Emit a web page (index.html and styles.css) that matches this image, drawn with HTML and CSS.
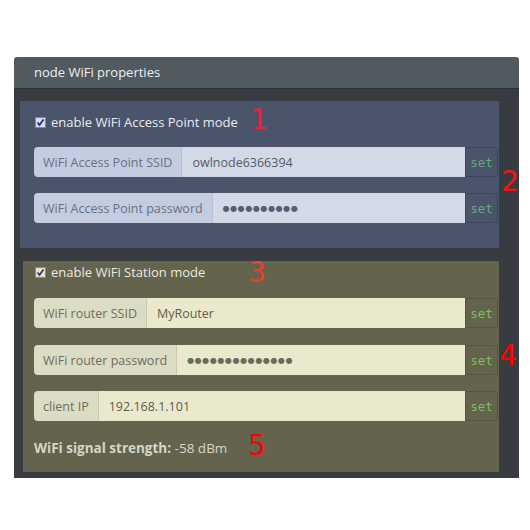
FILE: index.html
```html
<!DOCTYPE html>
<html>
<head>
<meta charset="utf-8">
<link rel="stylesheet" href="styles.css">
</head>
<body>
<div class="panel">
  <div class="panel-head">node WiFi properties</div>
  <div class="panel-body">
    <section class="box box-ap">
      <label class="check">
        <svg class="cb" width="11" height="11" viewBox="0 0 11 11"><rect x="0.5" y="0.5" width="10" height="10" fill="#d6dcee" stroke="#7e86a0"/><path d="M2.5 5.5 L4.5 8 L8.5 2.5" fill="none" stroke="#26307c" stroke-width="1.8"/></svg>
        <span>enable WiFi Access Point mode</span>
      </label>
      <div class="group">
        <span class="addon">WiFi Access Point SSID</span>
        <span class="field">owlnode6366394</span>
        <span class="btn">set</span>
      </div>
      <div class="group">
        <span class="addon">WiFi Access Point password</span>
        <span class="field dots">●●●●●●●●●●</span>
        <span class="btn">set</span>
      </div>
      <span class="mark m1">1</span>
      <span class="mark m2">2</span>
    </section>
    <section class="box box-st">
      <label class="check">
        <svg class="cb" width="11" height="11" viewBox="0 0 11 11"><rect x="0.5" y="0.5" width="10" height="10" fill="#e2e2d6" stroke="#8a8a78"/><path d="M2.5 5.5 L4.5 8 L8.5 2.5" fill="none" stroke="#3a3a5c" stroke-width="1.8"/></svg>
        <span>enable WiFi Station mode</span>
      </label>
      <div class="group">
        <span class="addon">WiFi router SSID</span>
        <span class="field">MyRouter</span>
        <span class="btn">set</span>
      </div>
      <div class="group">
        <span class="addon">WiFi router password</span>
        <span class="field dots">●●●●●●●●●●●●●●</span>
        <span class="btn">set</span>
      </div>
      <div class="group">
        <span class="addon">client IP</span>
        <span class="field">192.168.1.101</span>
        <span class="btn">set</span>
      </div>
      <p class="signal"><b>WiFi signal strength:</b> -58 dBm</p>
      <span class="mark m3">3</span>
      <span class="mark m4">4</span>
      <span class="mark m5">5</span>
    </section>
  </div>
</div>
</body>
</html>
```
FILE: styles.css
```css
html, body {
  margin: 0;
  padding: 0;
  background: #ffffff;
}
body {
  font-family: "Open Sans", "Noto Sans", sans-serif;
  font-size: 12px;
}
.panel {
  margin: 57px 0 0 14px;
  width: 505px;
  border-radius: 3px 3px 0 0;
  overflow: hidden;
}
.panel-head {
  height: 31px;
  line-height: 31px;
  background: #515a60;
  color: #eef0f2;
  font-size: 13px;
  padding-left: 20px;
  border-bottom: 1px solid #2c3033;
}
.panel-body {
  background: #383c40;
  padding: 12px 20px 6px 6px;
}
.box {
  position: relative;
}
.box-ap {
  background: #4a546b;
  padding: 10px 1px 25px 14px;
}
.box-st {
  background: #63634e;
  margin: 13px 0 0 3px;
  padding: 0 1px 16px 11px;
}
.check {
  display: flex;
  align-items: center;
  height: 22px;
  color: #e9ebf0;
  font-size: 13px;
}
.cb {
  margin: 0 5px 0 1px;
}
.box-st .check {
  color: #ecebdf;
}
.group {
  display: flex;
  height: 30px;
  margin-top: 15px;
}
.box-ap .group:first-of-type {
  margin-top: 14px;
}
.box-ap .group + .group {
  margin-top: 16px;
}
.box-st .group:first-of-type {
  margin-top: 15px;
}
.box-st .group + .group {
  margin-top: 17px;
}
.box-st .group + .group + .group {
  margin-top: 16px;
}
.addon {
  display: flex;
  align-items: center;
  padding: 0 9px 0 9px;
  border-radius: 4px 0 0 4px;
  font-size: 12.5px;
}
.field {
  flex: 1;
  display: flex;
  align-items: center;
  padding: 0 10px;
  font-size: 12.5px;
}
.btn {
  width: 31px;
  display: flex;
  align-items: center;
  justify-content: center;
  border: 1px solid;
  border-radius: 0 4px 4px 0;
  font-family: "DejaVu Sans Mono", monospace;
  font-size: 12.5px;
}
.box-ap .addon {
  background: #c4cce0;
  color: #697083;
  border-right: 1px solid #b6bed2;
}
.box-ap .field {
  background: #d3d9e6;
  color: #545b6a;
}
.box-ap .btn {
  background: #4a546b;
  border-color: #3c455a;
  color: #5faa7e;
}
.box-st .addon {
  background: #dcdcc4;
  color: #6d6d5c;
  border-right: 1px solid #c8c8b0;
}
.box-st .field {
  background: #ebe9cd;
  color: #5c5c4c;
}
.box-st .btn {
  background: #63634e;
  border-color: #555543;
  color: #7cbd5e;
}
.dots {
  font-family: "DejaVu Sans", sans-serif;
  font-size: 8px;
  letter-spacing: 0.6px;
}
.box-ap .dots { color: #555d72; }
.box-st .dots { color: #6a6a5a; }
.signal {
  margin: 19px 0 0 0;
  height: 16px;
  line-height: 16px;
  color: #d6d6c8;
  font-size: 13.5px;
}
.signal b {
  font-weight: 700;
}
.mark {
  position: absolute;
  font-family: "DejaVu Sans", sans-serif;
  font-size: 28px;
  line-height: 1;
}
.m1 { left: 230px; top: 5px; color: #dc2a3c; }
.m2 { left: 481px; top: 67px; color: #ff1010; }
.m3 { left: 225px; top: -2px; color: #e8402a; }
.m4 { left: 476px; top: 81px; color: #ff0000; }
.m5 { left: 225px; top: 171px; color: #ff0000; }
```
